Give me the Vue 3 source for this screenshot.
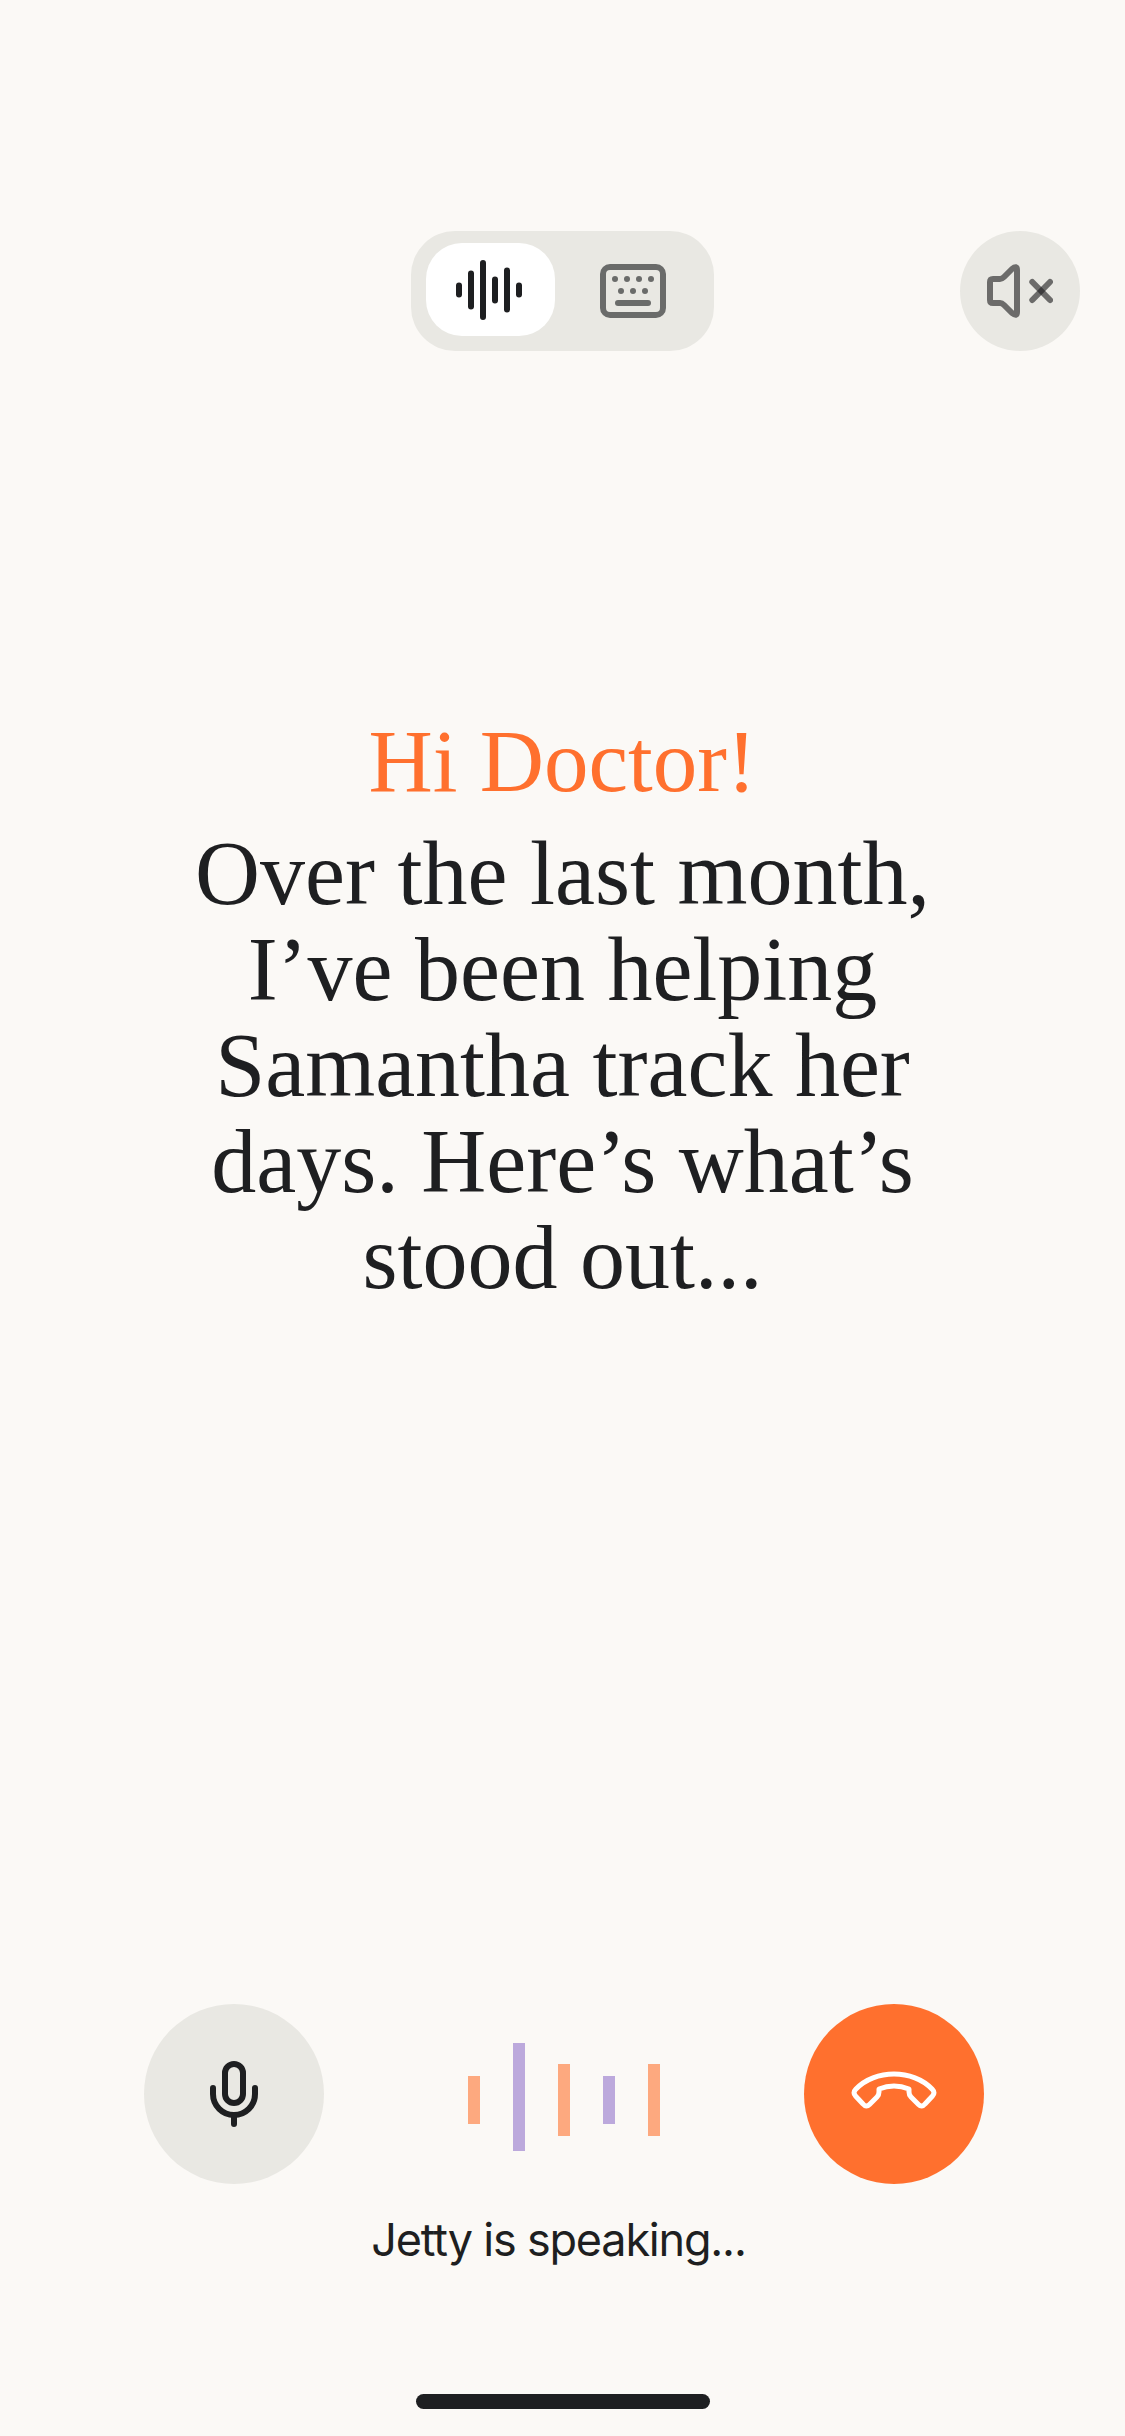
<template>
  <div class="screen">
    <div class="top-bar">
      <div class="mode-switch">
        <button class="mode-btn active">
          <svg width="69" height="60" viewBox="0 0 69 60" fill="none" stroke="#1e1f21" stroke-width="6" stroke-linecap="round">
            <path d="M3 25.5v9M15 13.5v33M27 3v54M39 19.5v21M51 10.5v39M63 25.5v9" />
          </svg>
        </button>
        <button class="mode-btn">
          <svg width="69" height="57" viewBox="0 0 69 57" fill="none" stroke="#1e1f21" stroke-width="6" stroke-linecap="round" opacity="0.62">
            <rect x="3" y="6" width="60" height="48" rx="7" />
            <path d="M18 42h30" />
            <g fill="#1e1f21" stroke="none">
              <circle cx="15" cy="18" r="3" />
              <circle cx="27" cy="18" r="3" />
              <circle cx="39" cy="18" r="3" />
              <circle cx="51" cy="18" r="3" />
              <circle cx="21" cy="30" r="3" />
              <circle cx="33" cy="30" r="3" />
              <circle cx="45" cy="30" r="3" />
            </g>
          </svg>
        </button>
      </div>
      <button class="mute-btn">
        <svg width="66" height="54" viewBox="0 0 66 54" fill="none" stroke="#1e1f21" stroke-width="6" stroke-linejoin="round" stroke-linecap="round">
          <path opacity="0.62" d="M6 15H13Q15 15 17 13L25 5Q30 1 30 6V48Q30 53 25 49L17 41Q15 39 13 39H6Q3 39 3 36V18Q3 15 6 15Z" />
          <path opacity="0.62" d="M45.3 18L63 36" />
          <path opacity="0.62" d="M63 18L45.3 36" />
        </svg>
      </button>
    </div>

    <div class="message">
      <div class="hello">Hi Doctor!</div>
      <div class="body">Over the last month, I’ve been helping Samantha track her days. Here’s what’s stood out...</div>
    </div>

    <div class="controls">
      <button class="round-btn mic">
        <svg width="48" height="66" viewBox="0 0 48 66" fill="none" stroke="#1e1f21" stroke-width="6" stroke-linecap="round">
          <rect x="15" y="3" width="18" height="39" rx="9" />
          <path d="M3 27v6a21 21 0 0 0 42 0v-6M24 54v9" />
        </svg>
      </button>
      <div class="wave">
        <span v-for="(bar, i) in bars" :key="i" class="bar" :style="{ height: bar.h + 'px', background: bar.c }"></span>
      </div>
      <button class="round-btn hangup">
        <svg width="86" height="46" viewBox="0 0 86 46" fill="none" stroke="#fff" stroke-width="5" stroke-linejoin="round">
          <path d="M4.5 18.5C14 8 29 3 43 3S72 8 81.5 18.5C83.5 20.5 83.5 23 81.5 25L74 33C72 35.5 69.5 35.5 67.5 33.5L60 26C58.5 24.5 58 23 58 21V18C48 14 38 14 28 18V21C28 23 27.5 24.5 26 26L18.5 33.5C16.5 35.5 14 35.5 12 33L4.5 25C2.5 23 2.5 20.5 4.5 18.5Z" />
        </svg>
      </button>
    </div>
    <div class="status">Jetty is speaking...</div>
    <div class="home-bar"></div>
  </div>
</template>

<script setup>
const bars = [
  { h: 48, c: '#fda97f' },
  { h: 108, c: '#bca9dc' },
  { h: 72, c: '#fda97f' },
  { h: 48, c: '#bca9dc' },
  { h: 72, c: '#fda97f' }
]
</script>

<style>
html, body { margin: 0; background: #fbf9f6; }
</style>

<style scoped>
.screen {
  width: 1125px;
  height: 2436px;
  box-sizing: border-box;
  background: #fbf9f6;
  display: flex;
  flex-direction: column;
  padding: 231px 0 27px;
  font-family: "Liberation Serif", serif;
  color: #1e1f21;
}
button { border: 0; padding: 0; display: flex; align-items: center; justify-content: center; }
svg { display: block; }
.top-bar {
  display: flex;
  justify-content: flex-end;
  gap: 246px;
  padding-right: 45px;
}
.mode-switch {
  width: 303px;
  height: 120px;
  box-sizing: border-box;
  padding: 12px 15px 15px;
  border-radius: 44px;
  background: #e9e8e3;
  display: flex;
  gap: 15px;
}
.mode-btn { width: 129px; height: 93px; border-radius: 36px; background: transparent; }
.mode-btn.active { background: #fff; }
.mute-btn { width: 120px; height: 120px; border-radius: 50%; background: #e9e8e3; }
.message {
  margin-top: 362px;
  padding: 0 182px;
  text-align: center;
}
.hello { font-size: 89px; line-height: 96px; color: #ff702e; }
.body { font-size: 90px; line-height: 96px; margin-top: 17px; }
.controls {
  margin-top: auto;
  display: flex;
  align-items: center;
  justify-content: space-between;
  padding: 0 141px 0 144px;
}
.round-btn { width: 180px; height: 180px; border-radius: 50%; }
.mic { background: #e9e8e3; }
.hangup { background: #ff702e; }
.wave { display: flex; align-items: center; gap: 33px; padding-top: 12px; }
.bar { width: 12px; display: block; }
.bar:nth-child(2) { margin-bottom: 6px; }
.status {
  margin-top: 28px;
  padding-right: 8px;
  text-align: center;
  font-family: Inter, "Liberation Sans", sans-serif;
  font-size: 45px;
  line-height: 56px;
  letter-spacing: -1.2px;
}
.home-bar {
  width: 294px;
  height: 15px;
  border-radius: 8px;
  background: #1e1f21;
  margin: 126px auto 0;
}
</style>
